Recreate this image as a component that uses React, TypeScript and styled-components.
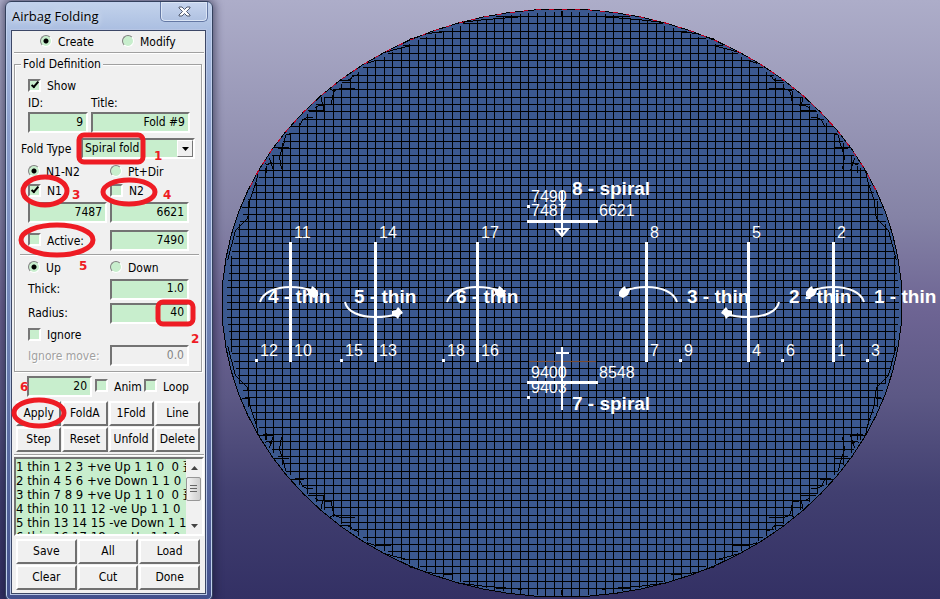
import React from 'react';
import styled, { createGlobalStyle, css } from 'styled-components';

const GlobalStyle = createGlobalStyle`
  *, *::before, *::after { box-sizing: border-box; }
  body {
    margin: 0;
    font-family: 'DejaVu Sans Condensed', 'DejaVu Sans', 'Noto Sans CJK SC', sans-serif;
    font-size: 12px;
    color: #000;
  }
`;

const green = '#c8eecd';

const Workspace = styled.main`
  display: flex;
  align-items: flex-start;
  min-height: 100vh;
  overflow: hidden;
  background: linear-gradient(#adadc9 0%, #8583a6 36%, #6d6493 52%, #5c5885 66%, #413f70 82%, #333064 100%);
`;

const Dialog = styled.section`
  position: relative;
  flex: none;
  width: 208px;
  margin: 1px 0 0 5px;
  padding: 0 6px 6px 5px;
  border: 1px solid #33405c;
  border-radius: 6px;
  background: linear-gradient(#c3d3ec 0, #a9bde0 30px, #8a9dcb 130px, #7387b8 50%, #42508c 100%);
  box-shadow: inset 0 0 0 1px #c2d1ee, 0 0 8px 2px rgba(20, 20, 50, 0.55);
`;

const TitleBar = styled.header`
  display: flex;
  justify-content: space-between;
  align-items: flex-start;
  height: 28px;
`;

const Title = styled.h1`
  margin: 0;
  padding: 5px 0 0 1px;
  font: 13px/18px 'Open Sans', 'Noto Sans', sans-serif;
  text-shadow: 0 0 6px #fff;
`;

const CloseButton = styled.button`
  display: grid;
  place-items: center;
  width: 48px;
  height: 20px;
  margin-right: -2px;
  padding: 0;
  border: 1px solid #6478a4;
  border-top: 0;
  border-radius: 0 0 5px 5px;
  background: linear-gradient(#c7d5ee, #afc1e1);
  box-shadow: inset 0 0 0 1px #dbe5f5;
`;

const Client = styled.div`
  border: 1px solid #3c4766;
  padding: 0 1px 1px 2px;
  background: #f0f0f0;
  box-shadow: 0 0 0 1px #b6c5e4;
`;

const ModeRow = styled.div`
  display: grid;
  grid-template-columns: 82px 1fr;
  align-items: center;
  height: 21px;
  padding-left: 26px;
`;

const Rule = styled.hr`
  height: 2px;
  margin: 0;
  border: 0;
  border-top: 1px solid #a0a0a0;
  border-bottom: 1px solid #fff;
`;

const Group = styled.fieldset`
  position: relative;
  min-width: 0;
  margin: 10px 2px 0 0;
  padding: 13px 8px 5px 13px;
  border: 1px solid #a0a0a0;
  box-shadow: 1px 1px 0 #fff, inset 1px 1px 0 #fff;
`;

const Legend = styled.legend`
  float: left;
  height: 16px;
  margin: -22px 0 0 -7px;
  padding: 0 2px;
  line-height: 16px;
  background: #f0f0f0;
`;

const Choice = styled.label`
  display: flex;
  align-items: center;
  gap: 6px;
  line-height: 16px;
  white-space: nowrap;
`;

const Radio = styled.input.attrs({ type: 'radio' })`
  appearance: none;
  flex: none;
  width: 12px;
  height: 12px;
  margin: 0 0 2px;
  border: 1px solid;
  border-color: #808080 #fff #fff #808080;
  border-radius: 50%;
  background: ${green};
  &:checked { background: radial-gradient(circle, #000 0 2px, ${green} 3px); }
`;

const Check = styled.input.attrs({ type: 'checkbox' })`
  appearance: none;
  display: grid;
  place-items: center;
  flex: none;
  width: 13px;
  height: 13px;
  margin: 0 0 2px;
  border: 2px solid;
  border-color: #777 #fff #fff #777;
  background: ${green};
  &:checked::after {
    content: '';
    width: 4px;
    height: 8px;
    margin-top: -2px;
    border: solid #000;
    border-width: 0 2px 2px 0;
    transform: rotate(40deg);
  }
`;

const TextBox = styled.input`
  width: 100%;
  min-width: 0;
  height: 21px;
  margin: 0;
  padding: 0 3px 2px;
  border: 2px solid;
  border-color: #737373 #fff #fff #737373;
  border-radius: 0;
  background: ${green};
  font: inherit;
  color: #000;
  text-align: right;
  &:disabled { background: #f0f0f0; color: #848484; }
`;

const Row = styled.div<{ $h: number; $cols?: string; $top?: number }>`
  display: grid;
  grid-template-columns: ${p => p.$cols || '79px 79px'};
  column-gap: 3px;
  align-items: center;
  height: ${p => p.$h}px;
  margin-top: ${p => p.$top || 0}px;
`;

const Label = styled.label<{ $dim?: boolean }>`
  line-height: 16px;
  white-space: nowrap;
  ${p => p.$dim && css`color: #a0a0a0; text-shadow: 1px 1px 0 #fff;`}
`;

const TypeRow = styled.div`
  display: grid;
  grid-template-columns: 60px 1fr;
  align-items: center;
  height: 31px;
  margin: 0 -2px 0 -7px;
`;

const SelectWrap = styled.div`
  position: relative;
  display: flex;
`;

const TypeSelect = styled.select`
  appearance: none;
  width: 100%;
  height: 21px;
  padding: 0 20px 1px 2px;
  border: 2px solid;
  border-color: #737373 #fff #fff #737373;
  border-radius: 0;
  background: ${green};
  font: inherit;
  color: #000;
`;

const Drop = styled.span`
  position: absolute;
  top: 2px;
  right: 2px;
  display: grid;
  place-items: center;
  width: 16px;
  height: 17px;
  border: 1px solid;
  border-color: #fff #777 #777 #fff;
  background: #f0f0f0;
  pointer-events: none;
`;

const InnerRule = styled(Rule)`
  margin: 3px -6px 2px -8px;
`;

const PlayRow = styled.div`
  display: grid;
  grid-template-columns: 65px 46px 1fr;
  column-gap: 3px;
  align-items: center;
  height: 29px;
  padding-left: 13px;
`;

const Buttons = styled.div<{ $n: number }>`
  display: grid;
  grid-template-columns: repeat(${p => p.$n}, 1fr);
  gap: 1px;
  padding: 0 4px 2px 2px;
`;

const Push = styled.button`
  height: 25px;
  padding: 0 0 2px;
  border: 2px solid;
  border-color: #fff #707070 #707070 #fff;
  border-radius: 0;
  background: #f0f0f0;
  font: inherit;
  color: #000;
  white-space: nowrap;
`;

const ListBox = styled.div`
  display: grid;
  grid-template-columns: minmax(0, 1fr) 16px;
  height: 79px;
  margin: 1px 0 3px;
  border: 2px solid;
  border-color: #737373 #fff #fff #737373;
`;

const Items = styled.ul`
  margin: 0;
  padding: 1px 0 0;
  overflow: hidden;
  list-style: none;
  background: ${green};
  font-size: 13px;
`;

const Item = styled.li`
  height: 14px;
  line-height: 14px;
  white-space: pre;
`;

const ScrollBar = styled.div`
  display: flex;
  flex-direction: column;
  background: #f1f1f1;
`;

const ScrollButton = styled.button`
  display: grid;
  place-items: center;
  height: 17px;
  padding: 0;
  border: 0;
  background: transparent;
`;

const Thumb = styled.div`
  display: grid;
  place-items: center;
  height: 24px;
  margin: 1px 1px auto 0;
  border: 1px solid #979797;
  border-radius: 2px;
  background: linear-gradient(90deg, #f5f5f5, #dcdcdc 60%, #cfcfcf);
`;

const Marks = styled.svg`
  position: absolute;
  left: -1px;
  top: -1px;
  width: 208px;
  height: 598px;
  overflow: visible;
  pointer-events: none;
  fill: none;
  stroke: #ee1c24;
  stroke-width: 5;
  text {
    fill: #ee1c24;
    stroke: none;
    font: bold 12px 'DejaVu Sans', sans-serif;
  }
`;

const Viewport = styled.svg`
  display: block;
  flex: 1;
  min-width: 0;
  font-family: 'Liberation Sans', Arial, sans-serif;
  fill: #fff;
`;

const NodeText = styled.text`
  font-size: 16px;
`;

const FoldText = styled.text`
  font-size: 19px;
  font-weight: bold;
`;

const CX = 562;
const CY = 303;
const RX = 340;
const RY = 294;

const outline = Array.from({ length: 80 }, (_, i) => {
  const a = (i / 80) * Math.PI * 2;
  return `${(CX + RX * Math.cos(a)).toFixed(1)},${(CY + RY * Math.sin(a)).toFixed(1)}`;
}).join(' ');

const columns = Array.from({ length: 79 }, (_, i) => {
  const d = (i - 39) * 8.5;
  const h = (RY - 2) * Math.sqrt(Math.max(0, 1 - (d / (RX - 4)) ** 2));
  return `M${Math.round(CX + d)} ${Math.round(CY - h)}V${Math.round(CY + h)}`;
}).join('');

const rows = Array.from({ length: 79 }, (_, i) => {
  const d = (i - 39) * 7.335;
  const w = (RX - 4) * Math.sqrt(Math.max(0, 1 - (d / (RY - 2)) ** 2));
  return `M${Math.round(CX - w)} ${Math.round(CY - 1 + d)}H${Math.round(CX + w)}`;
}).join('');

const rimCells =
  'M38 780L62 690L98 655L105 600L125 540L130 512M80 622H100M132 512H176L163 475M150 490L158 495L170 487M155 497V520' +
  'M200 508L193 470L207 430L212 405L225 402M178 444H222M228 380H267M253 378L262 360L275 352H293M278 330L327 332L318 292' +
  'M300 325L310 316L350 314L352 290L358 272L345 268M358 272L378 265H420M378 241H405L412 230L430 224M405 241L398 236' +
  'M455 190L480 182L527 181M500 160L535 150L583 138M583 118L640 100L715 93M735 68L800 60L920 50M1041 48V34';

const foldLines = [
  { x: 290, top: '11', base: '10' },
  { x: 375, top: '14', base: '13' },
  { x: 477, top: '17', base: '16' },
  { x: 646, top: '8', base: '7' },
  { x: 748, top: '5', base: '4' },
  { x: 833, top: '2', base: '1' },
];

const refNodes = [
  { x: 256, t: '12' }, { x: 341, t: '15' }, { x: 443, t: '18' },
  { x: 680, t: '9' }, { x: 782, t: '6' }, { x: 867, t: '3' },
];

const foldNames = [
  { x: 268, y: 303, t: '4 - thin' }, { x: 354, y: 303, t: '5 - thin' }, { x: 456, y: 303, t: '6 - thin' },
  { x: 687, y: 303, t: '3 - thin' }, { x: 789, y: 303, t: '2 - thin' }, { x: 874, y: 303, t: '1 - thin' },
  { x: 572, y: 195, t: '8 - spiral' }, { x: 572, y: 410, t: '7 - spiral' },
];

const spiralNodes = [
  { x: 531, y: 202, t: '7490' }, { x: 531, y: 216, t: '7487' }, { x: 599, y: 216, t: '6621' },
  { x: 531, y: 378, t: '9400' }, { x: 531, y: 393, t: '9403' }, { x: 599, y: 378, t: '8548' },
];

function OverArrow({ x, left }: { x: number; left?: boolean }) {
  return (
    <g transform={`translate(${x} 287)${left ? ' scale(-1 1)' : ''}`}>
      <path d="M-30 15C-27 5-14 0 0 0C10 0 18 2 23 4" fill="none" stroke="#fff" strokeWidth="2" />
      <path d="M17 3L21 2L22-1L25 1L28 5L28 9L24 11L19 8Z" />
    </g>
  );
}

function UnderArrow({ x, left }: { x: number; left?: boolean }) {
  return (
    <g transform={`translate(${x} 317)${left ? ' scale(-1 1)' : ''}`}>
      <path d="M-30-15C-28-5-15 0 0 0C10 0 17-1 22-3" fill="none" stroke="#fff" strokeWidth="2" />
      <path d="M17-6L21-7L23-10L26-7L28-4L25-2L23 2L21 0L17-2Z" />
    </g>
  );
}

function Mesh() {
  return (
    <g shapeRendering="crispEdges">
      <defs>
        <path id="rim" d={rimCells} transform="translate(215 0) scale(0.3333)" fill="none" stroke="#000" strokeWidth="3" />
        <clipPath id="upper"><rect x="213" y="0" width="727" height="190" /></clipPath>
      </defs>
      <polygon points={outline} fill="#3b588f" stroke="#000" />
      <g transform="translate(0.5 0.5)"><path d={columns + rows} stroke="#000" /></g>
      <use href="#rim" />
      <use href="#rim" transform="translate(1124 0) scale(-1 1)" />
      <use href="#rim" transform="translate(0 606) scale(1 -1)" />
      <use href="#rim" transform="translate(1124 606) scale(-1 -1)" />
      <polygon points={outline} fill="none" stroke="#c00020" strokeDasharray="5 8" clipPath="url(#upper)" />
    </g>
  );
}

function ModelView() {
  return (
    <Viewport viewBox="213 0 727 599" role="img" aria-label="Airbag mesh with fold lines">
      <Mesh />
      <path d="M529 361.5H596" stroke="#7a4a2c" />
      {foldLines.map(f => (
        <g key={f.top}>
          <rect x={f.x - 1} y="242" width="3" height="120" />
          <NodeText x={f.x + 4} y="238">{f.top}</NodeText>
          <NodeText x={f.x + 4} y="356">{f.base}</NodeText>
        </g>
      ))}
      {refNodes.map(n => (
        <g key={n.t}>
          <rect x={n.x - 1} y="359" width="3" height="3" />
          <NodeText x={n.x + 4} y="356">{n.t}</NodeText>
        </g>
      ))}
      {spiralNodes.map(n => <NodeText key={n.t} x={n.x} y={n.y}>{n.t}</NodeText>)}
      {foldNames.map(n => <FoldText key={n.t} x={n.x} y={n.y}>{n.t}</FoldText>)}
      <path d="M527 220H598V223H527ZM527 381H598V384H527ZM527 205H530V208H527ZM527 396H530V399H527Z" />
      <path d="M562 191V236M556 229H568L562 236ZM562 347V410M556 353H569" fill="none" stroke="#fff" strokeWidth="2" />
      <OverArrow x={290} />
      <UnderArrow x={375} />
      <OverArrow x={477} />
      <OverArrow x={647} left />
      <UnderArrow x={749} left />
      <OverArrow x={834} left />
    </Viewport>
  );
}

const folds = [
  '1 thin 1 2 3 +ve Up 1 1 0  0 葺',
  '2 thin 4 5 6 +ve Down 1 1 0  0',
  '3 thin 7 8 9 +ve Up 1 1 0  0 葺',
  '4 thin 10 11 12 -ve Up 1 1 0  0',
  '5 thin 13 14 15 -ve Down 1 1 0  0',
  '6 thin 16 17 18 -ve Up 1 1 0  0',
];

export default function App() {
  return (
    <Workspace>
      <GlobalStyle />
      <Dialog aria-label="Airbag Folding">
        <TitleBar>
          <Title>Airbag Folding</Title>
          <CloseButton aria-label="Close">
            <svg width="13" height="11" viewBox="0 0 13 11">
              <path d="M1 1H4L6.500 3.500L9 1H12V2L8.500 5.500L12 9V10H9L6.500 7.500L4 10H1V9L4.500 5.500L1 2Z" fill="#fff" stroke="#505a70" />
            </svg>
          </CloseButton>
        </TitleBar>
        <Client>
          <ModeRow>
            <Choice><Radio name="mode" defaultChecked />Create</Choice>
            <Choice><Radio name="mode" />Modify</Choice>
          </ModeRow>
          <Rule />
          <Group>
            <Legend>Fold Definition</Legend>
            <Row $h={16} $cols="1fr"><Choice><Check defaultChecked />Show</Choice></Row>
            <Row $h={18} $cols="60px 99px"><Label htmlFor="id">ID:</Label><Label htmlFor="title">Title:</Label></Row>
            <Row $h={21} $cols="60px 99px">
              <TextBox id="id" defaultValue="9" />
              <TextBox id="title" defaultValue="Fold #9" />
            </Row>
            <TypeRow>
              <Label htmlFor="type">Fold Type</Label>
              <SelectWrap>
                <TypeSelect id="type"><option>Spiral fold</option></TypeSelect>
                <Drop><svg width="7" height="4"><path d="M0 0H7L3.500 4Z" /></svg></Drop>
              </SelectWrap>
            </TypeRow>
            <Row $h={16}>
              <Choice><Radio name="axis" defaultChecked />N1-N2</Choice>
              <Choice><Radio name="axis" />Pt+Dir</Choice>
            </Row>
            <Row $h={22}>
              <Choice><Check defaultChecked />N1</Choice>
              <Choice><Check />N2</Choice>
            </Row>
            <Row $h={21}>
              <TextBox aria-label="N1 node" defaultValue="7487" />
              <TextBox aria-label="N2 node" defaultValue="6621" />
            </Row>
            <Row $h={21} $top={7}>
              <Choice><Check />Active:</Choice>
              <TextBox aria-label="Active node" defaultValue="7490" />
            </Row>
            <InnerRule />
            <Row $h={19}>
              <Choice><Radio name="dir" defaultChecked />Up</Choice>
              <Choice><Radio name="dir" />Down</Choice>
            </Row>
            <Row $h={24}><Label htmlFor="thick">Thick:</Label><TextBox id="thick" defaultValue="1.0" /></Row>
            <Row $h={24}><Label htmlFor="radius">Radius:</Label><TextBox id="radius" defaultValue="40" /></Row>
            <Row $h={20} $cols="1fr"><Choice><Check />Ignore</Choice></Row>
            <Row $h={21}><Label htmlFor="move" $dim>Ignore move:</Label><TextBox id="move" defaultValue="0.0" disabled /></Row>
          </Group>
          <PlayRow>
            <TextBox aria-label="Steps" defaultValue="20" />
            <Choice><Check />Anim</Choice>
            <Choice><Check />Loop</Choice>
          </PlayRow>
          <Buttons $n={4}>
            {['Apply', 'FoldA', '1Fold', 'Line', 'Step', 'Reset', 'Unfold', 'Delete'].map(t => <Push key={t}>{t}</Push>)}
          </Buttons>
          <Rule />
          <ListBox>
            <Items>{folds.map(f => <Item key={f}>{f}</Item>)}</Items>
            <ScrollBar>
              <ScrollButton aria-label="Scroll up"><svg width="7" height="4"><path d="M0 4H7L3.500 0Z" fill="#444" /></svg></ScrollButton>
              <Thumb><svg width="7" height="10"><path d="M0 1.500H7M0 4.500H7M0 7.500H7" stroke="#666" /></svg></Thumb>
              <ScrollButton aria-label="Scroll down"><svg width="7" height="4"><path d="M0 0H7L3.500 4Z" fill="#444" /></svg></ScrollButton>
            </ScrollBar>
          </ListBox>
          <Buttons $n={3}>
            {['Save', 'All', 'Load', 'Clear', 'Cut', 'Done'].map(t => <Push key={t}>{t}</Push>)}
          </Buttons>
        </Client>
        <Marks viewBox="5 1 208 598" aria-hidden="true">
          <rect x="79" y="135" width="64" height="27" rx="5" />
          <rect x="158" y="302" width="35" height="22" rx="5" />
          <ellipse cx="45" cy="191" rx="22" ry="14" />
          <ellipse cx="129" cy="192" rx="26" ry="12" />
          <ellipse cx="57" cy="240" rx="36" ry="15" />
          <ellipse cx="39" cy="413" rx="25" ry="13" />
          <text x="154" y="160">1</text>
          <text x="191" y="343">2</text>
          <text x="72" y="199">3</text>
          <text x="163" y="199">4</text>
          <text x="79" y="270">5</text>
          <text x="20" y="391">6</text>
        </Marks>
      </Dialog>
      <ModelView />
    </Workspace>
  );
}
